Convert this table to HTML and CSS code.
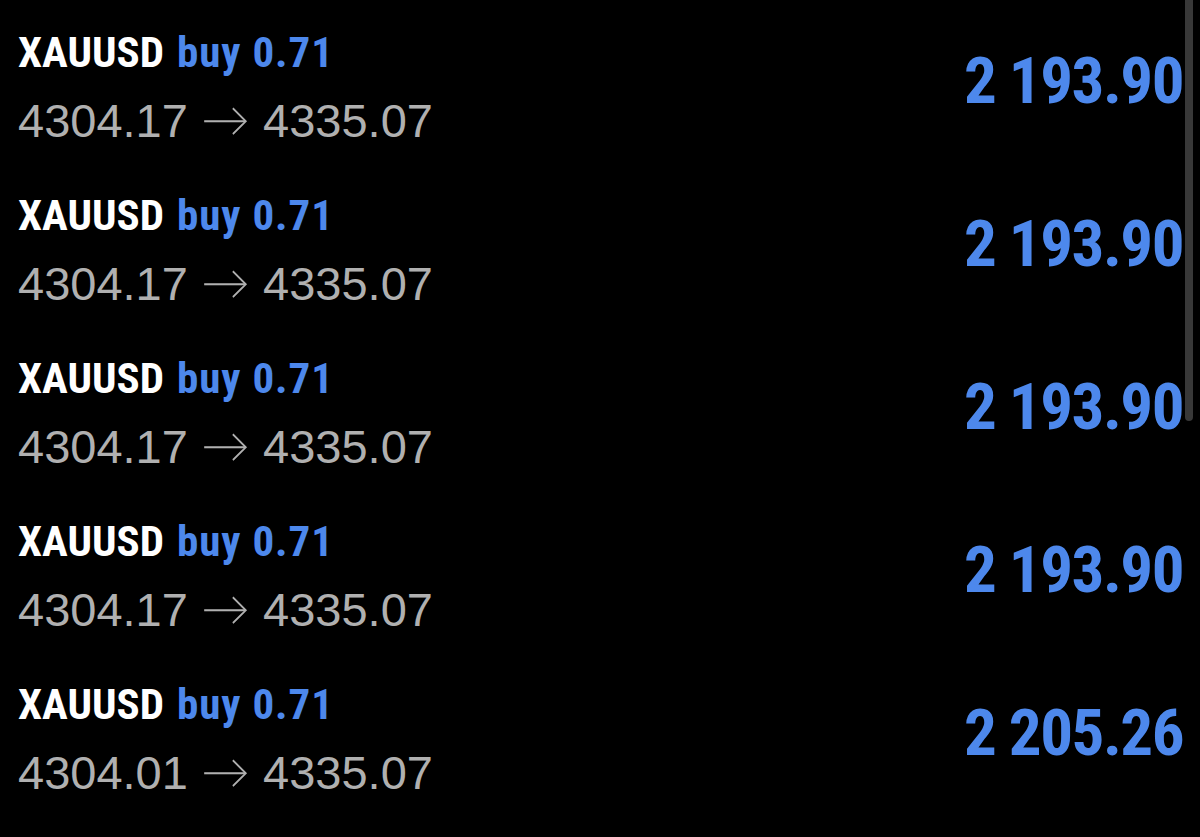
FILE: index.html
```html
<!DOCTYPE html>
<html>
<head>
<meta charset="utf-8">
<link rel="stylesheet" href="styles.css">
</head>
<body>
<div class="list">
  <div class="row">
    <div class="info">
      <div class="title"><span class="sym">XAUUSD</span> <span class="side">buy 0.71</span></div>
      <div class="prices">4304.17 <span class="arrow">→</span> 4335.07</div>
    </div>
    <div class="profit">2 193.90</div>
  </div>
  <div class="row">
    <div class="info">
      <div class="title"><span class="sym">XAUUSD</span> <span class="side">buy 0.71</span></div>
      <div class="prices">4304.17 <span class="arrow">→</span> 4335.07</div>
    </div>
    <div class="profit">2 193.90</div>
  </div>
  <div class="row">
    <div class="info">
      <div class="title"><span class="sym">XAUUSD</span> <span class="side">buy 0.71</span></div>
      <div class="prices">4304.17 <span class="arrow">→</span> 4335.07</div>
    </div>
    <div class="profit">2 193.90</div>
  </div>
  <div class="row">
    <div class="info">
      <div class="title"><span class="sym">XAUUSD</span> <span class="side">buy 0.71</span></div>
      <div class="prices">4304.17 <span class="arrow">→</span> 4335.07</div>
    </div>
    <div class="profit">2 193.90</div>
  </div>
  <div class="row">
    <div class="info">
      <div class="title"><span class="sym">XAUUSD</span> <span class="side">buy 0.71</span></div>
      <div class="prices">4304.01 <span class="arrow">→</span> 4335.07</div>
    </div>
    <div class="profit">2 205.26</div>
  </div>
</div>
<div class="scrollbar"></div>
</body>
</html>
```
FILE: styles.css
```css
html, body {
  margin: 0;
  padding: 0;
  background: #000;
  height: 100%;
  overflow: hidden;
}
.list {
  display: flex;
  flex-direction: column;
}
.row {
  display: flex;
  justify-content: space-between;
  align-items: center;
  padding: 28px 17px 16px 18px;
  height: 119px;
}
.info {
  display: flex;
  flex-direction: column;
  gap: 13px;
}
.title {
  font-family: "Roboto Condensed", Roboto, sans-serif;
  font-stretch: 75%;
  font-weight: 700;
  font-size: 43px;
  line-height: 50px;
  white-space: nowrap;
}
.sym { color: #fff; }
.side {
  color: #4d88ec;
  letter-spacing: 1px;
  margin-left: 3px;
}
.prices {
  font-family: "Liberation Sans", Arial, sans-serif;
  font-size: 47px;
  line-height: 56px;
  color: #b0b0b0;
  white-space: nowrap;
}
.arrow {
  font-family: Lato, sans-serif;
  font-weight: 300;
  font-size: 49px;
}
.profit {
  font-family: "Roboto Condensed", Roboto, sans-serif;
  font-stretch: 75%;
  font-weight: 700;
  font-size: 65px;
  letter-spacing: -1.5px;
  color: #4d88ec;
  white-space: nowrap;
  margin-top: -13px;
}
.scrollbar {
  position: absolute;
  top: 0;
  left: 1185px;
  width: 8px;
  height: 421px;
  background: #383838;
  border-radius: 0 0 4px 4px;
}
```
